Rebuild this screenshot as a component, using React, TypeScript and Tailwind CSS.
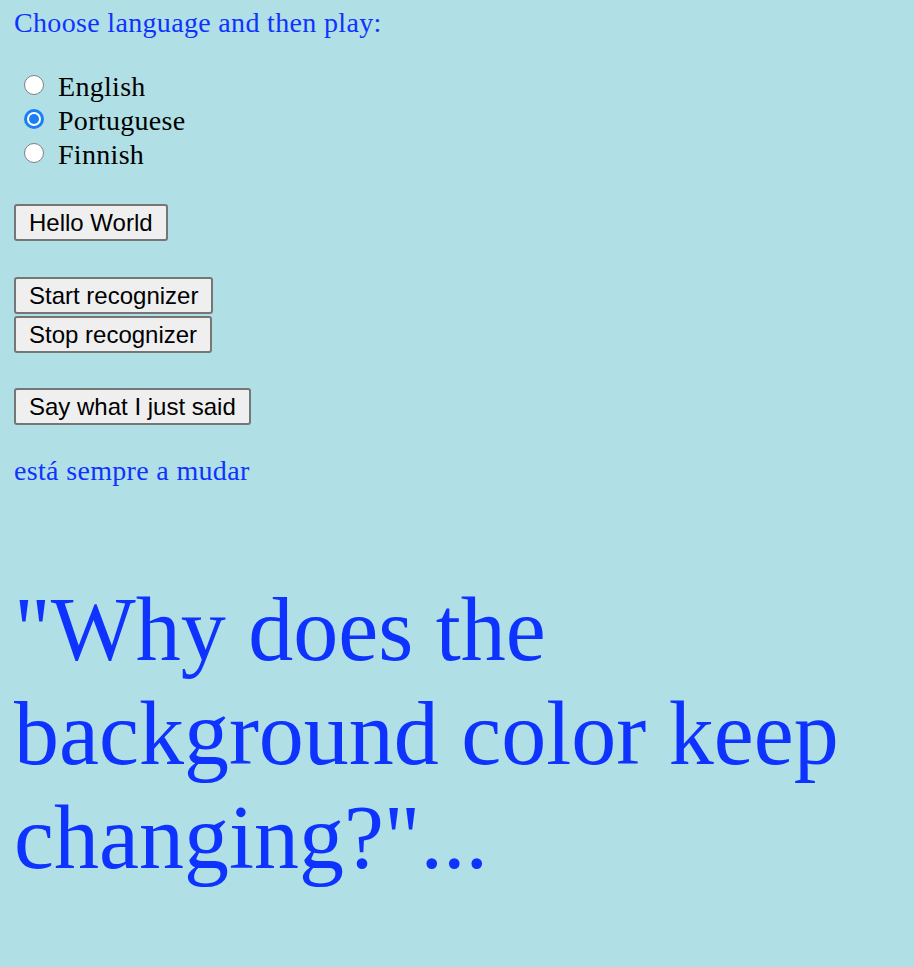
import { useState } from "react";

const languages = ["English", "Portuguese", "Finnish"];

function Radio({ checked }: { checked: boolean }) {
  return checked ? (
    <span className="box-border flex h-[20px] w-[20px] items-center justify-center rounded-full bg-[#1a7ef5]">
      <span className="flex h-[14px] w-[14px] items-center justify-center rounded-full bg-white">
        <span className="block h-[10px] w-[10px] rounded-full bg-[#1a7ef5]" />
      </span>
    </span>
  ) : (
    <span className="box-border block h-[20px] w-[20px] rounded-full border border-[#808080] bg-white" />
  );
}

function Btn({ label, className }: { label: string; className?: string }) {
  return (
    <button
      className={
        "box-border block h-[37px] rounded-[3px] border-2 border-[#767676] bg-[#efefef] px-[13px] font-['Liberation_Sans',Arial,sans-serif] text-[24px] leading-none text-black " +
        (className ?? "")
      }
    >
      {label}
    </button>
  );
}

export default function App() {
  const [lang, setLang] = useState("Portuguese");

  return (
    <div className="min-h-[967px] bg-[#b0dfe5] px-[14px] pt-[7px] font-['Liberation_Serif','Times_New_Roman',serif]">
      <p className="text-[28px] leading-[32px] tracking-[0.33px] text-[#0f33ff]">Choose language and then play:</p>

      <div className="mt-[31px]">
        {languages.map((l) => (
          <label
            key={l}
            onClick={() => setLang(l)}
            className="flex h-[34px] cursor-pointer items-center text-[28px] leading-[34px] tracking-[0.3px] text-black"
          >
            <span className="ml-[10px] mr-[14px] mt-[-5px] block">
              <Radio checked={lang === l} />
            </span>
            {l}
          </label>
        ))}
      </div>

      <Btn label="Hello World" className="mt-[32px]" />
      <Btn label="Start recognizer" className="mt-[36px]" />
      <Btn label="Stop recognizer" className="mt-[2px]" />
      <Btn label="Say what I just said" className="mt-[35px]" />

      <p className="mt-[30px] text-[28px] leading-[32px] tracking-[0.33px] text-[#0f33ff]">está sempre a mudar</p>

      <p className="mt-[91px] text-[90px] leading-[104px] text-[#0f33ff]">
        "Why does the background color keep changing?"...
      </p>
    </div>
  );
}
